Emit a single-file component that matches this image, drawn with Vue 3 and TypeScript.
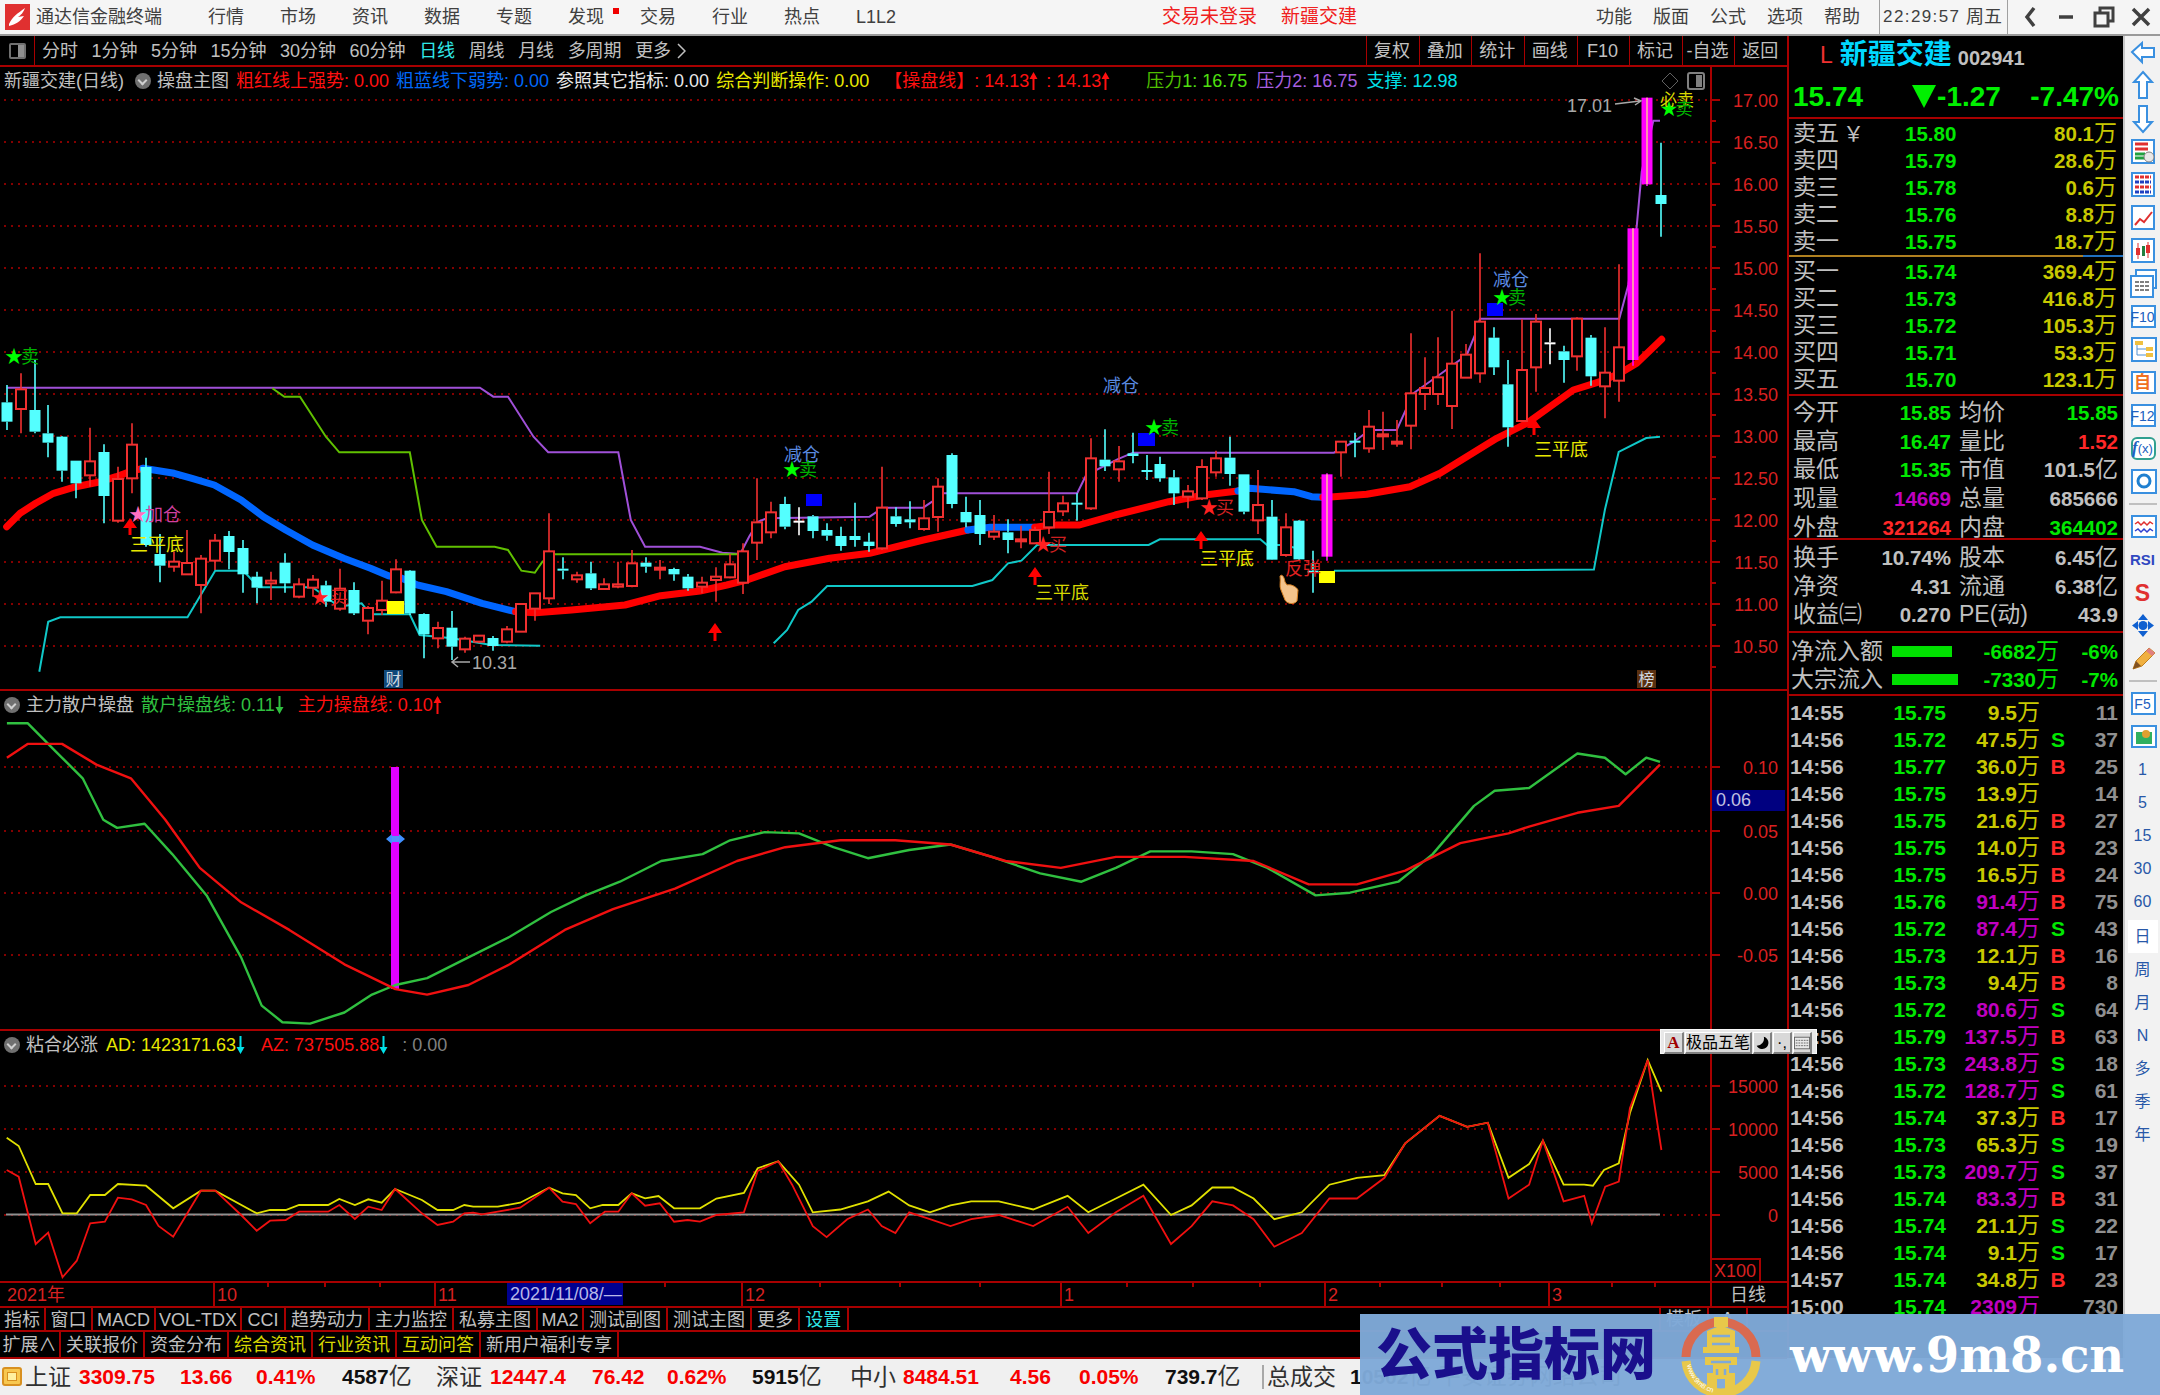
<script setup lang="ts">
type Pt = [number, number]
type Conv = (x: number, y: number) => Pt
const z8: Conv = (x, y) => [x / 2.24, 330 + y / 3]
const z9: Conv = (x, y) => [700 + x / 2.24, 330 + y / 3]
const z10: Conv = (x, y) => [1300 + x / 3, 80 + y / 3]
const sh: Conv = (x, y) => [x * 1.3776, y * 1.3776]
const z12: Conv = (x, y) => [x / 2.24, 1020 + y / 3]
const z11: Conv = (x, y) => [1580 + x / 2.703, 1020 + y / 3]
const zz = (c: Conv, f: number[]): Pt[] => {
  const o: Pt[] = []
  for (let i = 0; i < f.length; i += 2) o.push(c(f[i], f[i + 1]))
  return o
}
const d = (p: Pt[]) => 'M' + p.map((q) => q[0].toFixed(1) + ' ' + q[1].toFixed(1)).join('L')

const thick = [
  { c: '#ff0000', d: d(zz(z8, [15, 590, 45, 550, 80, 520, 120, 490, 170, 470, 225, 455, 260, 440, 290, 425, 320, 415])) },
  { c: '#0066ff', d: d(zz(z8, [320, 415, 390, 430, 430, 445, 480, 465, 540, 510, 590, 560, 640, 600, 700, 645, 770, 685, 830, 715, 870, 737, 900, 745, 935, 765, 1000, 785, 1080, 820, 1155, 845])) },
  { c: '#ff0000', d: d([...zz(z8, [1155, 845, 1200, 848, 1280, 840, 1400, 825, 1480, 797]), ...zz(z9, [0, 783, 60, 765, 110, 748, 190, 710, 290, 685, 380, 670, 500, 630, 600, 600])]) },
  { c: '#0066ff', d: d(zz(z9, [600, 600, 650, 592, 750, 592])) },
  { c: '#ff0000', d: d(zz(z9, [750, 592, 790, 585, 850, 585, 930, 555, 1050, 515, 1130, 495, 1205, 483])) },
  { c: '#0066ff', d: d(zz(z9, [1205, 483, 1230, 475, 1260, 478, 1330, 485, 1370, 500, 1395, 502])) },
  { c: '#ff0000', d: d([...zz(z9, [1395, 502, 1420, 500]), ...zz(z10, [200, 1243, 330, 1220, 420, 1180, 500, 1130, 590, 1075, 680, 1030, 820, 930, 900, 905, 960, 880, 1010, 850, 1085, 778])]) },
]
const purple = d([
  ...zz(z8, [15, 173, 1075, 173, 1105, 200, 1138, 200, 1195, 320, 1228, 367, 1385, 367, 1413, 570, 1445, 650]),
  ...zz(z9, [0, 650, 50, 668, 90, 672, 110, 620, 130, 575, 150, 565, 380, 560, 410, 533, 500, 533, 520, 515, 545, 490, 845, 490, 865, 435, 935, 388, 970, 368, 1420, 368, 1465, 335, 1500, 300]),
  ...zz(z10, [225, 1050, 290, 1050, 340, 940, 410, 890, 500, 825, 525, 765, 540, 716, 958, 716, 985, 615, 1010, 440, 1025, 275, 1060, 122, 1080, 122]),
])
const green = d([
  ...zz(z8, [610, 175, 637, 200, 672, 200, 730, 320, 760, 367, 918, 367, 945, 570, 978, 650, 1108, 650, 1138, 660, 1168, 722, 1198, 728, 1215, 695, 1240, 673]),
  ...zz(z9, [90, 673]),
])
const cyan1 = d(zz(z8, [88, 1025, 108, 875, 135, 862, 420, 862, 482, 722, 545, 722, 580, 772, 700, 772, 760, 830, 810, 820, 830, 853, 918, 853, 940, 915, 1013, 925, 1100, 945, 1210, 947]))
const cyan2 = d(zz(z9, [165, 940, 195, 900, 220, 840, 250, 815, 285, 768, 610, 768, 655, 750, 690, 700, 720, 692, 755, 645, 1005, 645, 1030, 628, 1255, 628, 1270, 645, 1300, 645, 1340, 655]))
const cyan3 = d([...zz(z9, [1420, 722]), ...zz(sh, [1157, 413.5, 1165, 370, 1175, 328, 1195, 318, 1205, 317])])

type C = [number, number, number, number, string]
const raw: C[] = [
  [165, 217, 275, 300, 'c'], [130, 178, 237, 310, 'r'], [90, 240, 305, 310, 'c'], [225, 310, 338, 382, 'c'], [318, 320, 422, 455, 'c'],
  [392, 392, 460, 505, 'c'], [293, 394, 436, 470, 'r'], [343, 366, 498, 580, 'c'], [410, 447, 572, 578, 'r'], [280, 344, 445, 490, 'r'],
  [383, 411, 645, 650, 'c'], [612, 672, 707, 757, 'c'], [665, 695, 710, 725, 'r'], [600, 699, 733, 735, 'r'], [675, 686, 765, 850, 'r'],
  [612, 632, 692, 720, 'r'], [603, 618, 666, 718, 'c'], [630, 654, 733, 788, 'c'], [725, 740, 773, 820, 'c'], [725, 752, 760, 810, 'r'],
  [670, 698, 760, 788, 'c'], [745, 763, 800, 805, 'r'], [735, 749, 773, 800, 'r'], [752, 766, 815, 830, 'c'], [716, 776, 836, 842, 'r'],
  [757, 780, 850, 855, 'c'], [828, 834, 872, 913, 'r'], [752, 812, 840, 855, 'r'], [688, 718, 787, 790, 'r'], [720, 722, 850, 855, 'c'],
  [850, 852, 913, 985, 'c'], [875, 894, 925, 955, 'r'], [843, 893, 950, 990, 'c'], [920, 926, 958, 968, 'r'], [915, 917, 935, 940, 'r'],
  [918, 924, 948, 962, 'c'], [888, 898, 935, 940, 'r'], [820, 822, 905, 905, 'r'], [790, 790, 836, 872, 'r'], [550, 664, 805, 822, 'r'],
  [682, 716, 722, 748, 'c'], [725, 736, 748, 758, 'r'], [695, 730, 775, 780, 'c'], [745, 763, 777, 780, 'r'], [695, 763, 770, 775, 'r'],
  [660, 700, 768, 772, 'r'], [682, 698, 710, 728, 'c'], [690, 713, 719, 748, 'r'], [713, 717, 733, 752, 'c'], [732, 740, 775, 782, 'c'],
  [740, 758, 770, 790, 'r'],
  [712, 740, 750, 815, 'r'], [672, 703, 742, 745, 'r'], [640, 664, 758, 792, 'r'], [445, 577, 638, 690, 'r'], [515, 547, 607, 625, 'r'],
  [500, 522, 590, 598, 'c'], [532, 572, 576, 616, 'w'], [555, 559, 603, 625, 'c'], [580, 600, 617, 632, 'c'], [590, 618, 648, 662, 'c'],
  [518, 618, 630, 650, 'c'], [608, 635, 648, 665, 'c'], [410, 533, 655, 660, 'r'], [532, 559, 582, 590, 'c'], [514, 568, 577, 595, 'c'],
  [510, 565, 597, 602, 'r'], [445, 470, 561, 605, 'r'], [370, 375, 522, 535, 'c'], [500, 546, 577, 592, 'c'], [510, 555, 612, 645, 'c'],
  [555, 605, 620, 630, 'r'], [568, 607, 630, 670, 'c'], [587, 628, 634, 655, 'r'], [590, 600, 640, 640, 'r'], [425, 546, 592, 612, 'r'],
  [497, 520, 544, 558, 'r'], [490, 518, 523, 572, 'c'], [325, 385, 535, 540, 'r'], [298, 389, 409, 423, 'c'], [348, 394, 418, 455, 'r'],
  [308, 370, 378, 400, 'c'], [375, 420, 424, 450, 'c'], [380, 402, 445, 455, 'c'], [420, 442, 490, 525, 'c'], [465, 484, 500, 535, 'r'],
  [388, 411, 505, 510, 'r'], [362, 385, 427, 440, 'r'], [320, 383, 432, 467, 'c'], [433, 433, 545, 553, 'c'], [420, 525, 571, 612, 'r'],
  [510, 560, 689, 690, 'c'], [550, 592, 675, 680, 'r'], [570, 572, 688, 690, 'c'], [662, 722, 724, 788, 'c'], [430, 433, 680, 692, 'm'],
  // from index 96 the y values are read on the 80-based crop
  [1085, 1085, 1117, 1190, 'r'], [1058, 1082, 1086, 1132, 'c'], [990, 1040, 1105, 1118, 'r'], [995, 1063, 1069, 1110, 'r'], [1020, 1085, 1091, 1100, 'r'],
  [760, 940, 1037, 1108, 'r'], [832, 924, 942, 990, 'r'], [772, 892, 942, 975, 'r'], [692, 851, 978, 1047, 'r'], [792, 824, 893, 893, 'r'],
  [520, 725, 880, 908, 'r'], [742, 773, 862, 885, 'c'], [840, 913, 1042, 1100, 'c'], [718, 870, 1023, 1025, 'r'], [702, 725, 862, 935, 'r'],
  [745, 787, 791, 853, 'w'], [797, 814, 840, 908, 'c'], [712, 716, 829, 872, 'r'], [765, 773, 889, 917, 'c'], [742, 878, 919, 1015, 'r'],
  [553, 802, 902, 965, 'r'], [445, 445, 840, 857, 'm'], [53, 53, 313, 318, 'm'], [188, 345, 372, 470, 'c'],
]
const candles = raw.map((c, i) => {
  const base = i < 96 ? 330 : 80
  const x = Math.round(6.7 + 13.9 * i)
  const [h, t, b, l] = c.slice(0, 4).map((v) => base + (v as number) / 3)
  const colour = { c: '#54ffff', r: '#f03030', w: '#ffffff', m: '#ff00ff' }[c[4]] as string
  return { x, wick: `M${x} ${h.toFixed(1)}V${t.toFixed(1)}M${x} ${b.toFixed(1)}V${l.toFixed(1)}`, t, h: Math.max(b - t, 2), type: c[4], colour }
})

const prices = [17, 16.5, 16, 15.5, 15, 14.5, 14, 13.5, 13, 12.5, 12, 11.5, 11, 10.5]
const yP = (p: number) => 100 + (17 - p) * 84
const axis1 = prices.map((p) => ({ y: yP(p), t: p.toFixed(2) }))
const minor1 = prices.map((p) => yP(p) + 21)

const axis2 = [
  { y: 767, t: '0.10' },
  { y: 831, t: '0.05' },
  { y: 893, t: '0.00' },
  { y: 955, t: '-0.05' },
]
const axis3 = [
  { y: 1086, t: '15000' },
  { y: 1129, t: '10000' },
  { y: 1172, t: '5000' },
  { y: 1215, t: '0' },
]

const green2 = d(zz(sh, [5, 525, 20, 525, 40, 545, 60, 565, 75, 595, 85, 601, 105, 598, 125, 620, 150, 650, 175, 695, 190, 730, 205, 742, 225, 743, 250, 735, 270, 722, 287, 715, 310, 710, 340, 695, 370, 680, 400, 662, 425, 650, 450, 640, 480, 625, 510, 620, 530, 610, 555, 604, 580, 605, 605, 615, 630, 623, 660, 617, 690, 613, 720, 622, 755, 634, 785, 640, 810, 630, 835, 618, 865, 618, 895, 620, 920, 630, 955, 650, 980, 648, 1015, 640, 1040, 620, 1070, 585, 1085, 574, 1110, 572, 1145, 547, 1165, 550, 1180, 562, 1195, 550, 1205, 553]))
const red2 = d(zz(sh, [5, 550, 20, 540, 45, 540, 70, 555, 95, 565, 120, 595, 145, 630, 175, 655, 210, 675, 250, 700, 287, 718, 310, 722, 340, 715, 370, 700, 410, 675, 445, 660, 490, 645, 535, 625, 570, 615, 610, 610, 650, 610, 690, 613, 730, 625, 770, 630, 810, 622, 860, 622, 910, 625, 950, 642, 985, 642, 1020, 632, 1060, 612, 1095, 605, 1110, 600, 1145, 590, 1175, 585, 1205, 555]))

const yellow3 = d([
  ...zz(z12, [15, 353, 42, 378, 80, 492, 108, 492, 140, 580, 172, 580, 202, 525, 235, 525, 264, 492, 327, 497, 388, 565, 450, 512, 482, 512, 575, 580, 605, 570, 640, 570, 670, 555, 735, 555, 760, 537, 795, 555, 825, 538, 855, 548, 885, 507, 945, 540, 980, 570, 1015, 570, 1040, 555, 1060, 560, 1115, 560, 1165, 548, 1230, 503, 1260, 520, 1290, 525, 1322, 565, 1350, 555, 1385, 555, 1415, 520, 1445, 535, 1475, 528, 1510, 565, 1568, 565]),
  ...zz(sh, [520, 870, 540, 866, 550, 848, 565, 843, 580, 860, 590, 880, 610, 878, 630, 872, 645, 865, 660, 875, 675, 880, 690, 875, 705, 872, 725, 872, 750, 878, 775, 868, 790, 880, 810, 870, 830, 860, 850, 882, 865, 875, 880, 862, 895, 862, 910, 870, 925, 885, 945, 880, 965, 860, 985, 855, 1005, 853, 1020, 830, 1045, 810, 1065, 818, 1080, 815, 1095, 855, 1110, 845, 1120, 828, 1135, 860, 1150, 860]),
  ...zz(z11, [35, 497, 65, 450, 105, 430, 135, 280, 183, 120, 220, 215]),
])
const red3 = d([
  ...zz(z12, [15, 450, 42, 470, 80, 672, 108, 638, 140, 772, 172, 722, 202, 610, 235, 605, 264, 533, 295, 538, 327, 555, 355, 618, 388, 650, 450, 512, 482, 512, 540, 585, 575, 632, 605, 602, 640, 600, 670, 575, 735, 575, 760, 555, 795, 597, 825, 560, 855, 570, 885, 507, 945, 580, 980, 615, 1015, 605, 1040, 580, 1060, 578, 1080, 583, 1115, 575, 1165, 563, 1230, 503, 1260, 545, 1290, 552, 1322, 610, 1355, 575, 1385, 575, 1415, 520, 1445, 557, 1478, 550, 1510, 605, 1540, 600, 1568, 605]),
  ...zz(sh, [520, 882, 540, 880, 550, 850, 565, 843, 575, 860, 590, 890, 600, 898, 615, 885, 630, 878, 640, 890, 650, 895, 660, 880, 675, 885, 690, 890, 705, 885, 725, 882, 750, 890, 775, 876, 790, 895, 810, 880, 830, 868, 850, 903, 865, 890, 880, 872, 895, 875, 910, 885, 925, 905, 945, 895, 965, 870, 985, 870, 1005, 855, 1020, 830, 1045, 810, 1065, 818, 1080, 815, 1095, 870, 1110, 860, 1120, 828, 1135, 872, 1150, 868]),
  ...zz(z11, [32, 610, 68, 500, 105, 485, 135, 265, 183, 120, 220, 390]),
])

const notes = [
  { x: 14, y: 357, t: '★', c: '#00ff00', s: 18 },
  { x: 30, y: 357, t: '卖', c: '#00b000', s: 18 },
  { x: 138, y: 515, t: '★', c: '#ff70c0', s: 18 },
  { x: 163, y: 515, t: '加仓', c: '#d040a0', s: 18 },
  { x: 157, y: 545, t: '三平底', c: '#e8e800', s: 18 },
  { x: 320, y: 598, t: '★', c: '#ff2020', s: 18 },
  { x: 339, y: 598, t: '买', c: '#e02020', s: 18 },
  { x: 802, y: 455, t: '减仓', c: '#5a8ae0', s: 18 },
  { x: 792, y: 470, t: '★', c: '#00ff00', s: 18 },
  { x: 808, y: 470, t: '卖', c: '#00b000', s: 18 },
  { x: 1062, y: 593, t: '三平底', c: '#d8d800', s: 18 },
  { x: 1043, y: 545, t: '★', c: '#ff2020', s: 18 },
  { x: 1058, y: 545, t: '买', c: '#d02020', s: 18 },
  { x: 1121, y: 386, t: '减仓', c: '#5a8ae0', s: 18 },
  { x: 1154, y: 428, t: '★', c: '#00ff00', s: 18 },
  { x: 1170, y: 428, t: '卖', c: '#00b000', s: 18 },
  { x: 1209, y: 508, t: '★', c: '#ff2020', s: 18 },
  { x: 1225, y: 508, t: '买', c: '#d02020', s: 18 },
  { x: 1227, y: 559, t: '三平底', c: '#e8e800', s: 18 },
  { x: 1303, y: 569, t: '反弹', c: '#e02020', s: 18 },
  { x: 1511, y: 280, t: '减仓', c: '#5a8ae0', s: 18 },
  { x: 1502, y: 298, t: '★', c: '#00ff00', s: 18 },
  { x: 1517, y: 298, t: '卖', c: '#00b000', s: 18 },
  { x: 1561, y: 450, t: '三平底', c: '#e8e800', s: 18 },
  { x: 1677, y: 100, t: '必卖', c: '#d8d800', s: 17 },
  { x: 1669, y: 109, t: '★', c: '#00ff00', s: 17 },
  { x: 1684, y: 109, t: '卖', c: '#00b000', s: 17 },
]
const squares = [
  { x: 387, y: 601, w: 17, h: 13, c: '#ffff00' },
  { x: 806, y: 494, w: 16, h: 12, c: '#0000ff' },
  { x: 1138, y: 433, w: 17, h: 13, c: '#0000ff' },
  { x: 1319, y: 571, w: 16, h: 12, c: '#ffff00' },
  { x: 1487, y: 303, w: 16, h: 13, c: '#0000ff' },
]
const arrow = (x: number, y1: number, y2: number) =>
  `M${x} ${y1}L${x + 7} ${y1 + 10}H${x + 1.5}V${y2}H${x - 1.5}V${y1 + 10}H${x - 7}Z`
const arrows = [arrow(130, 518, 535), arrow(715, 623, 641), arrow(1035, 567, 585), arrow(1201, 531, 549), arrow(1534, 418, 435)]

const menus = ['行情', '市场', '资讯', '数据', '专题', '发现', '交易', '行业', '热点', 'L1L2']
const right = ['功能', '版面', '公式', '选项', '帮助']
const periods = ['分时', '1分钟', '5分钟', '15分钟', '30分钟', '60分钟', '日线', '周线', '月线', '多周期']
const tools = ['复权', '叠加', '统计', '画线', 'F10', '标记', '-自选', '返回']
const tabs1 = ['指标', '窗口', 'MACD', 'VOL-TDX', 'CCI', '趋势动力', '主力监控', '私募主图', 'MA2', '测试副图', '测试主图', '更多', '设置']
const tabs2 = ['扩展∧', '关联报价', '资金分布', '综合资讯', '行业资讯', '互动问答', '新用户福利专享']

const sells = [
  { l: '卖五', mark: '￥', p: '15.80', v: '80.1' },
  { l: '卖四', mark: '', p: '15.79', v: '28.6' },
  { l: '卖三', mark: '', p: '15.78', v: '0.6' },
  { l: '卖二', mark: '', p: '15.76', v: '8.8' },
  { l: '卖一', mark: '', p: '15.75', v: '18.7' },
]
const buys = [
  { l: '买一', mark: '', p: '15.74', v: '369.4' },
  { l: '买二', mark: '', p: '15.73', v: '416.8' },
  { l: '买三', mark: '', p: '15.72', v: '105.3' },
  { l: '买四', mark: '', p: '15.71', v: '53.3' },
  { l: '买五', mark: '', p: '15.70', v: '123.1' },
]
const stats1 = [
  ['今开', '15.85', 'g', '均价', '15.85', 'g', ''],
  ['最高', '16.47', 'g', '量比', '1.52', 'r', ''],
  ['最低', '15.35', 'g', '市值', '101.5', 'w', '亿'],
  ['现量', '14669', 'p', '总量', '685666', 'w', ''],
  ['外盘', '321264', 'r', '内盘', '364402', 'g', ''],
]
const stats2 = [
  ['换手', '10.74%', 'w', '股本', '6.45', 'w', '亿'],
  ['净资', '4.31', 'w', '流通', '6.38', 'w', '亿'],
  ['收益㈢', '0.270', 'w', 'PE(动)', '43.9', 'w', ''],
]
const trades: [string, string, string, string, string][] = [
  ['14:55', '15.75', '9.5', '', '11'], ['14:56', '15.72', '47.5', 'S', '37'], ['14:56', '15.77', '36.0', 'B', '25'], ['14:56', '15.75', '13.9', '', '14'],
  ['14:56', '15.75', '21.6', 'B', '27'], ['14:56', '15.75', '14.0', 'B', '23'], ['14:56', '15.75', '16.5', 'B', '24'], ['14:56', '15.76', '91.4', 'B', '75'],
  ['14:56', '15.72', '87.4', 'S', '43'], ['14:56', '15.73', '12.1', 'B', '16'], ['14:56', '15.73', '9.4', 'B', '8'], ['14:56', '15.72', '80.6', 'S', '64'],
  ['14:56', '15.79', '137.5', 'B', '63'], ['14:56', '15.73', '243.8', 'S', '18'], ['14:56', '15.72', '128.7', 'S', '61'], ['14:56', '15.74', '37.3', 'B', '17'],
  ['14:56', '15.73', '65.3', 'S', '19'], ['14:56', '15.73', '209.7', 'S', '37'], ['14:56', '15.74', '83.3', 'B', '31'], ['14:56', '15.74', '21.1', 'S', '22'],
  ['14:56', '15.74', '9.1', 'S', '17'], ['14:57', '15.74', '34.8', 'B', '23'], ['15:00', '15.74', '2309', '', '730'],
]
const stripText = ['1', '5', '15', '30', '60']
const stripText2 = ['日', '周', '月', 'N', '多', '季', '年']
const monthMarks = [
  { x: 214, t: '10' },
  { x: 435, t: '11' },
  { x: 742, t: '12' },
  { x: 1061, t: '1' },
  { x: 1325, t: '2' },
  { x: 1549, t: '3' },
]
const ticks = [268, 325, 380, 665, 820, 900, 980, 1127, 1193, 1260, 1380, 1442, 1500, 1612, 1655]
</script>

<template>
  <div class="app">
    <header class="title">
      <svg class="logo" viewBox="0 0 25 26">
        <rect width="25" height="26" fill="#e03030" />
        <path d="M4 20C8 12 12 10 20 4C18 9 16 11 13 13L19 12C15 18 11 20 4 22Z" fill="#ffffff" />
      </svg>
      <span class="brand">通达信金融终端</span>
      <nav class="menu">
        <span v-for="m in menus" :key="m" class="mi">{{ m }}<i v-if="m === '发现'" class="dot"></i></span>
      </nav>
      <span class="alert first">交易未登录</span>
      <span class="alert second">新疆交建</span>
      <nav class="menu-r">
        <span v-for="m in right" :key="m">{{ m }}</span>
      </nav>
      <div class="clock"><span class="time">22:29:57</span><span>周五</span></div>
      <div class="win">
        <svg viewBox="0 0 150 24" width="150" height="24">
          <path d="M18 3L11 12L18 21" class="wb" />
          <path d="M43 12H57" class="wb" />
          <path d="M79 8H92V21H79ZM84 8V3H97V16H92" class="wb thin" />
          <path d="M117 4L133 20M133 4L117 20" class="wb" />
        </svg>
      </div>
    </header>

    <div class="main">
      <section class="left">
        <div class="toolbar">
          <div class="tb-icon"><i></i></div>
          <div class="periods">
            <span v-for="p in periods" :key="p" :class="{ on: p === '日线' }">{{ p }}</span>
            <span class="more">更多<svg width="9" height="18" viewBox="0 0 9 18"><path d="M1 2L8 9L1 16" class="chev" /></svg></span>
          </div>
          <div class="tools">
            <span v-for="t in tools" :key="t">{{ t }}</span>
          </div>
        </div>

        <div class="panel p1">
          <svg class="chart" viewBox="0 67 1787 622" width="1787" height="622">
            <path v-for="a in axis1" :key="a.t" :d="`M4 ${a.y}H1711`" class="dots" />
            <path :d="purple" class="ln" stroke="#a050d8" />
            <path :d="green" class="ln" stroke="#60c000" />
            <path :d="cyan1" class="ln" stroke="#10c8c8" />
            <path :d="cyan2" class="ln" stroke="#10c8c8" />
            <path :d="cyan3" class="ln" stroke="#10c8c8" />
            <path v-for="(t, i) in thick" :key="i" :d="t.d" :stroke="t.c" class="thick" />
            <g v-for="(c, i) in candles" :key="i">
              <path :d="c.wick" :stroke="c.colour" class="wick" />
              <rect v-if="c.type === 'r'" :x="c.x - 5" :y="c.t" width="10" :height="c.h" class="hollow" :stroke="c.colour" />
              <rect v-else :x="c.x - 5.5" :y="c.t" width="11" :height="c.h" :fill="c.colour" />
              <rect v-if="c.type === 'm'" :x="c.x - 1" :y="c.t" width="2" :height="c.h" fill="#ff90b0" />
            </g>
            <rect v-for="(s, i) in squares" :key="'s' + i" :x="s.x" :y="s.y" :width="s.w" :height="s.h" :fill="s.c" />
            <path v-for="(a, i) in arrows" :key="'a' + i" :d="a" fill="#ff0000" />
            <text v-for="(n, i) in notes" :key="'n' + i" :x="n.x" :y="n.y + 6" :fill="n.c" :font-size="n.s" text-anchor="middle">{{ n.t }}</text>
            <text x="1567" y="112" class="gray18">17.01</text>
            <path d="M1615 104L1640 101M1634 98L1641 101L1635 105" class="thinline" />
            <text x="472" y="669" class="gray18">10.31</text>
            <path d="M470 662H452M458 657L452 662L458 667" class="thinline" />
            <rect x="384" y="670" width="19" height="18" fill="#104878" />
            <text x="393.5" y="685" class="badge-t" text-anchor="middle">财</text>
            <rect x="1637" y="670" width="19" height="18" fill="#5a3010" />
            <text x="1646.5" y="685" class="badge-t" text-anchor="middle">榜</text>
            <path d="M1280 576C1282 574 1284 576 1285 582L1287 585C1290 584 1296 586 1298 590L1297 601C1294 605 1287 604 1285 600L1281 590C1279 586 1281 582 1280 576Z" fill="#f4c48c" stroke="#d88020" stroke-width="1" />
            <path d="M1711 67V689" class="axis" />
            <g v-for="a in axis1" :key="'t' + a.t">
              <path :d="`M1711 ${a.y}H1720`" class="axis" />
              <text x="1778" :y="a.y + 7" class="ax" text-anchor="end">{{ a.t }}</text>
            </g>
            <path v-for="m in minor1" :key="m" :d="`M1711 ${m}H1716`" class="axis" />
          </svg>
          <div class="legend l1">
            <span class="c-w s1">新疆交建(日线)</span>
            <i class="fold"></i>
            <span class="c-w">操盘主图</span>
            <span class="c-r g">粗红线上强势: 0.00</span>
            <span class="c-b g">粗蓝线下弱势: 0.00</span>
            <span class="c-wh g">参照其它指标: 0.00</span>
            <span class="c-y g">综合判断操作: 0.00</span>
            <span class="c-r g2">【操盘线】: 14.13<svg class="arw" viewBox="0 0 9 18"><path d="M4.5 0L8.5 7H5.5V18H3.5V7H.5Z" fill="currentColor" /></svg></span>
            <span class="c-r g5">: 14.13<svg class="arw" viewBox="0 0 9 18"><path d="M4.5 0L8.5 7H5.5V18H3.5V7H.5Z" fill="currentColor" /></svg></span>
            <span class="g3"><b class="c-g">压力</b><b class="c-g2">1: 16.75</b></span>
            <span class="g6"><b class="c-p">压力2: 16.75</b></span>
            <span class="c-c g6">支撑: 12.98</span>
            <span class="ctrl">
              <svg width="44" height="22" viewBox="0 0 44 22">
                <path d="M8 3L16 11L8 19L0 11Z" class="dia" />
                <rect x="26" y="3" width="16" height="16" rx="2" class="box" />
                <rect x="34" y="5" width="6" height="12" fill="#808080" />
              </svg>
            </span>
          </div>
        </div>

        <div class="panel p2">
          <svg class="chart" viewBox="0 691 1787 338" width="1787" height="338">
            <path v-for="a in axis2" :key="a.t" :d="`M4 ${a.y}H1711`" class="dots" />
            <rect x="391" y="767" width="8" height="222" fill="#e000ff" />
            <path d="M386 839L392 834V844ZM405 839L399 834V844Z" fill="#4090ff" />
            <rect x="392" y="836" width="7" height="6" fill="#5090ff" />
            <path :d="green2" class="mid" stroke="#30c040" />
            <path :d="red2" class="mid" stroke="#f01010" />
            <path d="M1711 691V1029" class="axis" />
            <g v-for="a in axis2" :key="a.t">
              <path :d="`M1711 ${a.y}H1720`" class="axis" />
              <text x="1778" :y="a.y + 7" class="ax" text-anchor="end">{{ a.t }}</text>
            </g>
            <rect x="1712" y="790" width="73" height="21" fill="#000080" />
            <text x="1716" y="806" class="val">0.06</text>
          </svg>
          <div class="legend l2">
            <i class="fold"></i>
            <span class="c-w">主力散户操盘</span>
            <span class="c-g3 g">散户操盘线: 0.11<svg class="arw dn" viewBox="0 0 9 18"><path d="M4.5 0L8.5 7H5.5V18H3.5V7H.5Z" fill="currentColor" /></svg></span>
            <span class="c-r g4">主力操盘线: 0.10<svg class="arw" viewBox="0 0 9 18"><path d="M4.5 0L8.5 7H5.5V18H3.5V7H.5Z" fill="currentColor" /></svg></span>
          </div>
        </div>

        <div class="panel p3">
          <svg class="chart" viewBox="0 1031 1787 250" width="1787" height="250">
            <path v-for="a in axis3" :key="a.t" :d="`M4 ${a.y}H1711`" class="dots" />
            <path d="M6 1214.5H1660" class="zero" />
            <path :d="yellow3" class="small" stroke="#e0e000" />
            <path :d="red3" class="small" stroke="#f01010" />
            <path d="M1711 1031V1281" class="axis" />
            <g v-for="a in axis3" :key="a.t">
              <path :d="`M1711 ${a.y}H1720`" class="axis" />
              <text x="1778" :y="a.y + 7" class="ax" text-anchor="end">{{ a.t }}</text>
            </g>
            <path d="M1711 1259H1760V1281" class="axis" fill="none" />
            <text x="1714" y="1277" class="ax">X100</text>
          </svg>
          <div class="legend l3">
            <i class="fold"></i>
            <span class="c-w">粘合必涨</span>
            <span class="c-y g7">AD: 1423171.63<svg class="arw dn c-c" viewBox="0 0 9 18"><path d="M4.5 0L8.5 7H5.5V18H3.5V7H.5Z" fill="currentColor" /></svg></span>
            <span class="c-r g8">AZ: 737505.88<svg class="arw dn c-c" viewBox="0 0 9 18"><path d="M4.5 0L8.5 7H5.5V18H3.5V7H.5Z" fill="currentColor" /></svg></span>
            <span class="c-d g4">: 0.00</span>
          </div>
        </div>

        <svg class="taxis" viewBox="0 1283 1787 23" width="1787" height="23">
          <text x="7" y="1301" class="ax">2021年</text>
          <g v-for="m in monthMarks" :key="m.x">
            <path :d="`M${m.x} 1283V1306`" class="axis" />
            <text :x="m.x + 3" y="1301" class="ax">{{ m.t }}</text>
          </g>
          <path v-for="t in ticks" :key="t" :d="`M${t} 1283V1287`" class="axis" />
          <rect x="507" y="1283" width="116" height="22" fill="#000090" />
          <text x="510" y="1300" class="date">2021/11/08/—</text>
          <path d="M1711 1283V1306" class="axis" />
          <text x="1730" y="1301" class="daily">日线</text>
        </svg>

        <div class="tabs t1">
          <div class="grid-1">
            <span v-for="t in tabs1" :key="t" :class="{ cy: t === '设置' }">{{ t }}</span>
          </div>
          <div class="extra">
            <span class="tpl">模板</span>
            <span class="tpl2">A</span>
          </div>
        </div>
        <div class="tabs t2">
          <div class="grid-2">
            <span v-for="t in tabs2" :key="t" :class="{ ye: ['综合资讯', '行业资讯', '互动问答'].includes(t) }">{{ t }}</span>
          </div>
        </div>
      </section>

      <aside class="quote">
        <div class="q-head">
          <span class="big-l">L</span>
          <span class="q-name">新疆交建</span>
          <span class="q-code">002941</span>
        </div>
        <div class="q-price">
          <span class="p1v">15.74</span>
          <span class="p2v"><i class="tri"></i>-1.27</span>
          <span class="p3v">-7.47%</span>
        </div>
        <div class="book sell">
          <div v-for="r in sells" :key="r.l" class="b-row">
            <span class="lab">{{ r.l }}<em v-if="r.mark">{{ r.mark }}</em></span>
            <span class="num c-g1">{{ r.p }}</span>
            <span class="num c-y2">{{ r.v }}<u>万</u></span>
          </div>
        </div>
        <div class="split"></div>
        <div class="book buy">
          <div v-for="r in buys" :key="r.l" class="b-row">
            <span class="lab">{{ r.l }}</span>
            <span class="num c-g1">{{ r.p }}</span>
            <span class="num c-y2">{{ r.v }}<u>万</u></span>
          </div>
        </div>
        <div class="stats s-a">
          <div v-for="r in stats1" :key="r[0]" class="s-row">
            <div class="cell"><span class="lab">{{ r[0] }}</span><span class="num" :class="'k-' + r[2]">{{ r[1] }}</span></div>
            <div class="cell"><span class="lab">{{ r[3] }}</span><span class="num" :class="'k-' + r[5]">{{ r[4] }}<u v-if="r[6]">{{ r[6] }}</u></span></div>
          </div>
        </div>
        <div class="stats s-b">
          <div v-for="r in stats2" :key="r[0]" class="s-row">
            <div class="cell"><span class="lab">{{ r[0] }}</span><span class="num" :class="'k-' + r[2]">{{ r[1] }}</span></div>
            <div class="cell"><span class="lab">{{ r[3] }}</span><span class="num" :class="'k-' + r[5]">{{ r[4] }}<u v-if="r[6]">{{ r[6] }}</u></span></div>
          </div>
        </div>
        <div class="flow">
          <div class="f-row">
            <span class="lab">净流入额</span><i class="bar b60"></i><span class="num c-g1 fv">-6682<u>万</u></span><span class="num c-g1 fp">-6%</span>
          </div>
          <div class="f-row">
            <span class="lab">大宗流入</span><i class="bar b66"></i><span class="num c-g1 fv">-7330<u>万</u></span><span class="num c-g1 fp">-7%</span>
          </div>
        </div>
        <div class="trades">
          <div v-for="(t, i) in trades" :key="i" class="t-row">
            <span class="num k-w">{{ t[0] }}</span>
            <span class="num c-g1 ra">{{ t[1] }}</span>
            <span class="num ra" :class="parseFloat(t[2]) >= 70 ? 'k-p' : 'c-y2'">{{ t[2] }}<u>万</u></span>
            <span class="num ce" :class="t[3] === 'B' ? 'k-r' : 'c-g1'">{{ t[3] }}</span>
            <span class="num ra k-d">{{ t[4] }}</span>
          </div>
        </div>
      </aside>

      <aside class="strip">
        <svg class="si" viewBox="0 0 30 33"><path d="M4 16L14 7V12H26V21H14V26Z" class="arr" /></svg>
        <svg class="si" viewBox="0 0 30 33"><path d="M15 3L24 13H19V29H11V13H6Z" class="arr" /></svg>
        <svg class="si" viewBox="0 0 30 33"><path d="M15 30L24 20H19V4H11V20H6Z" class="arr" /></svg>
        <svg class="si" viewBox="0 0 30 33">
          <rect x="4" y="5" width="22" height="23" class="ib" />
          <path d="M7 9H20M7 14H20" stroke="#e03030" stroke-width="3" />
          <path d="M7 19H17M7 23H17" stroke="#20a040" stroke-width="3" />
          <circle cx="21" cy="22" r="5" fill="#e8e8e8" stroke="#808080" />
        </svg>
        <svg class="si" viewBox="0 0 30 33">
          <rect x="4" y="5" width="22" height="23" class="ib" />
          <path d="M7 9H23" stroke="#e03030" stroke-width="3" stroke-dasharray="4 1" />
          <path d="M7 14H23" stroke="#2040c0" stroke-width="3" stroke-dasharray="4 1" />
          <path d="M7 19H23" stroke="#e03030" stroke-width="3" stroke-dasharray="4 1" />
          <path d="M7 24H23" stroke="#2040c0" stroke-width="3" stroke-dasharray="4 1" />
        </svg>
        <svg class="si" viewBox="0 0 30 33">
          <rect x="4" y="5" width="22" height="23" class="ib" />
          <path d="M7 24L12 18L16 21L24 11" stroke="#e03030" stroke-width="2" fill="none" />
        </svg>
        <svg class="si" viewBox="0 0 30 33">
          <rect x="4" y="5" width="22" height="23" class="ib" />
          <path d="M10 9V25M20 8V24" stroke="#e03030" />
          <rect x="8" y="14" width="4" height="7" fill="#e03030" />
          <rect x="14" y="12" width="3" height="10" fill="#208040" />
          <rect x="18" y="11" width="4" height="8" fill="#e03030" />
        </svg>
        <svg class="si" viewBox="0 0 30 33">
          <rect x="8" y="3" width="20" height="18" class="ib" />
          <rect x="3" y="9" width="22" height="21" class="ib" />
          <path d="M7 15H21M7 19H21M7 23H21" stroke="#808080" stroke-width="2" stroke-dasharray="4 1" />
        </svg>
        <div class="si box"><span class="st">F10</span></div>
        <svg class="si" viewBox="0 0 30 33">
          <rect x="4" y="5" width="24" height="23" class="ib" />
          <rect x="7" y="8" width="8" height="4" fill="#f0c040" />
          <rect x="18" y="14" width="7" height="4" fill="#f0c040" />
          <rect x="18" y="20" width="7" height="4" fill="#f0c040" />
          <path d="M9 12V22H18M9 16H18" stroke="#5090d0" fill="none" />
        </svg>
        <div class="si box"><span class="zi">自</span></div>
        <div class="si box"><span class="st">F12</span></div>
        <div class="si box teal"><span class="fx"><i>f</i>(x)</span></div>
        <svg class="si" viewBox="0 0 30 33">
          <rect x="4" y="5" width="24" height="23" class="ib" />
          <circle cx="16" cy="16" r="6" fill="none" stroke="#2080d0" stroke-width="3" />
        </svg>
        <i class="sep"></i>
        <svg class="si" viewBox="0 0 30 33">
          <rect x="4" y="6" width="24" height="21" class="ib" />
          <path d="M7 14L10 12L13 15L16 12L19 15L22 12L25 14" stroke="#e03030" fill="none" stroke-width="1.5" />
          <path d="M7 21L10 19L13 22L16 19L19 22L22 19L25 21" stroke="#3040d0" fill="none" stroke-width="1.5" />
        </svg>
        <div class="si"><span class="rsi">RSI</span></div>
        <div class="si"><span class="ss">S</span></div>
        <svg class="si" viewBox="0 0 30 33">
          <path d="M15 5L20 11H10ZM15 28L20 22H10ZM4 16.5L10 12V21ZM26 16.5L20 12V21Z" fill="#1060d0" />
          <circle cx="15" cy="16.5" r="4.5" fill="#1060d0" />
        </svg>
        <svg class="si" viewBox="0 0 30 33">
          <path d="M5 27L8 19L21 6L27 11L14 24Z" fill="#f0b040" stroke="#c08020" />
          <path d="M5 27L8 19L13 24Z" fill="#805020" />
          <path d="M21 6L27 11L24 14L18 9Z" fill="#e08080" />
        </svg>
        <i class="sep"></i>
        <div class="si box"><span class="st">F5</span></div>
        <svg class="si" viewBox="0 0 30 33">
          <rect x="4" y="6" width="24" height="21" class="ib" />
          <rect x="8" y="12" width="16" height="12" fill="#30b060" />
          <circle cx="18" cy="14" r="4" fill="#e0a030" />
        </svg>
        <div v-for="t in stripText" :key="t" class="si"><span class="tx">{{ t }}</span></div>
        <div class="gapb"></div>
        <div v-for="t in stripText2" :key="t" class="si" :class="{ sel: t === '日' }"><span class="tx">{{ t }}</span></div>
      </aside>
    </div>

    <footer class="status">
      <i class="st-ico"><b></b></i>
      <span class="lc">上证</span><span class="red">3309.75</span><span class="red">13.66</span><span class="red">0.41%</span><span class="blk">4587<u>亿</u></span>
      <span class="lc">深证</span><span class="red">12447.4</span><span class="red">76.42</span><span class="red">0.62%</span><span class="blk">5915<u>亿</u></span>
      <span class="lc">中小</span><span class="red">8484.51</span><span class="red">4.56</span><span class="red">0.05%</span><span class="blk">739.7<u>亿</u></span>
      <span class="lc tot">总成交</span><span class="blk rest">10502<u>亿 平安证券网络公司</u></span>
    </footer>

    <div class="mark">
      <span class="mk-cn">公式指标网</span>
      <svg class="mk-logo" viewBox="0 0 84 84" width="84" height="84">
        <path id="mkarc" d="M7 44A35 35 0 0 1 77 44" fill="none" stroke="#d96a50" stroke-width="9" />
        <path d="M7 48A35 35 0 0 0 42 80A35 35 0 0 0 77 48" fill="none" stroke="#e8c84a" stroke-width="9" />
        <path d="M35 4H49V14H46L56 18V34H60V40H24V34H28V18L38 14H35Z" fill="#e8c84a" />
        <path d="M26 44H58V52H50V60H56V80H46V66H38V80H28V60H34V52H26Z" fill="#e8c84a" />
        <path d="M33 23H51M33 31H51M32 49H52M38 56V62M46 56V62" stroke="#7fa9d8" stroke-width="2.5" />
        <path id="mkt" d="M8 52A35 35 0 0 0 32 79" fill="none" />
        <text class="mk-s"><textPath href="#mkt">www.9m8.cn</textPath></text>
      </svg>
      <span class="mk-en">www.9m8.cn</span>
    </div>

    <div class="ime">
      <span class="a">A</span><span class="n">极品五笔</span>
      <span class="k">
        <svg width="18" height="18" viewBox="0 0 18 18"><path d="M11 2A7 7 0 1 1 3 12A8 8 0 0 0 11 2Z" fill="#000" /></svg>
      </span>
      <span class="k">·,</span>
      <span class="k">
        <svg width="18" height="14" viewBox="0 0 18 14"><rect x="0.5" y="0.5" width="17" height="13" fill="#e8e8e8" stroke="#606060" /><path d="M2 4H16M2 7H16M2 10H16" stroke="#606060" stroke-dasharray="2 1" /></svg>
      </span>
    </div>
  </div>
</template>

<style>
html,
body {
  margin: 0;
  background: #000;
}
</style>

<style scoped>
.app {
  position: relative;
  width: 2160px;
  height: 1395px;
  overflow: hidden;
  background: #000;
  color: #c0c0c0;
  font-family: 'Liberation Sans', 'Noto Sans CJK SC', sans-serif;
  font-size: 18px;
  line-height: 24px;
}
u {
  text-decoration: none;
  font-weight: 400;
}
i {
  font-style: normal;
}
b {
  font-weight: 400;
}

/* title bar */
.title {
  display: flex;
  align-items: center;
  height: 34px;
  background: #f5f5f5;
  border-bottom: 2px solid #9a9a9a;
  color: #404040;
  font-size: 18px;
  white-space: nowrap;
}
.logo {
  width: 25px;
  height: 26px;
  margin-left: 5px;
  flex: none;
}
.brand {
  width: 126px;
  margin-left: 6px;
}
.menu {
  display: flex;
  margin-left: 46px;
  gap: 36px;
}
.mi {
  position: relative;
  display: block;
}
.dot {
  position: absolute;
  right: -15px;
  top: 3px;
  width: 6px;
  height: 6px;
  background: #f00000;
}
.alert {
  color: #f02020;
  font-size: 19px;
}
.first {
  margin-left: 266px;
}
.second {
  margin-left: 24px;
}
.menu-r {
  display: flex;
  gap: 21px;
  margin-left: 239px;
}
.clock {
  display: flex;
  align-items: center;
  gap: 11px;
  height: 34px;
  margin-left: 19px;
  padding: 0 5px 0 3px;
  border-left: 1px solid #a0a0a0;
  border-right: 1px solid #a0a0a0;
}
.time {
  font-size: 17px;
  width: 72px;
  letter-spacing: 1.4px;
}
.win {
  margin-left: 8px;
  height: 24px;
}
.wb {
  fill: none;
  stroke: #404040;
  stroke-width: 3.5;
}
.thin {
  stroke-width: 3;
}

/* layout */
.main {
  display: flex;
  height: 1322px;
}
.left {
  width: 1787px;
  flex: none;
}
.toolbar {
  display: flex;
  align-items: center;
  height: 29px;
  border-bottom: 2px solid #a80000;
  white-space: nowrap;
}
.tb-icon {
  display: flex;
  align-items: center;
  justify-content: center;
  width: 34px;
  height: 29px;
  border-right: 1px solid #a80000;
  flex: none;
}
.tb-icon i {
  display: block;
  width: 17px;
  height: 16px;
  border: 2px solid #707070;
  border-radius: 2px;
  box-sizing: border-box;
  background: linear-gradient(90deg, #000 55%, #909090 55%);
}
.periods {
  display: flex;
  gap: 13.5px;
  margin-left: 7px;
}
.more {
  display: flex;
  align-items: center;
  gap: 6px;
}
.chev {
  fill: none;
  stroke: #c0c0c0;
  stroke-width: 1.5;
}
.on {
  color: #30e8e8;
}
.tools {
  display: grid;
  grid-template-columns: repeat(8, 52.6px);
  margin-left: auto;
  height: 29px;
}
.tools span {
  display: flex;
  align-items: center;
  justify-content: center;
  border-left: 1px solid #a80000;
  padding-right: 2px;
}

.panel {
  position: relative;
  border-bottom: 2px solid #a80000;
}
.p1 {
  height: 622px;
}
.p2 {
  height: 338px;
}
.p3 {
  height: 250px;
}
.chart,
.taxis {
  display: block;
}
.legend {
  position: absolute;
  left: 0;
  top: 0;
  width: 1711px;
  height: 27px;
  display: flex;
  align-items: center;
  white-space: nowrap;
  font-size: 18px;
}
.s1 {
  margin-left: 4px;
  width: 131px;
}
.arw {
  display: inline-block;
  width: 9px;
  height: 18px;
  vertical-align: -3px;
}
.dn {
  transform: rotate(180deg);
}
.fold {
  display: block;
  flex: none;
  width: 16px;
  height: 16px;
  border-radius: 50%;
  background: #707070;
  position: relative;
  margin-right: 6px;
}
.fold::after {
  content: '';
  position: absolute;
  left: 4px;
  top: 4px;
  width: 5px;
  height: 5px;
  border-right: 2px solid #d0d0d0;
  border-bottom: 2px solid #d0d0d0;
  transform: rotate(45deg);
}
.g {
  margin-left: 7px;
}
.g2 {
  margin-left: 15px;
}
.g3 {
  margin-left: 36px;
}
.g4 {
  margin-left: 14px;
}
.g5 {
  margin-left: 8px;
}
.g6 {
  margin-left: 9px;
}
.g7 {
  margin-left: 8px;
}
.g8 {
  margin-left: 16px;
}
.ctrl {
  margin-left: auto;
  margin-right: 5px;
  height: 22px;
}
.dia {
  fill: none;
  stroke: #606060;
}
.box {
  fill: #000;
  stroke: #808080;
  stroke-width: 2;
}
.l2 .fold,
.l3 .fold {
  margin-left: 4px;
}
.c-w {
  color: #c0c0c0;
}
.c-wh {
  color: #e8e8e8;
}
.c-r {
  color: #ff1010;
}
.c-b {
  color: #0068f8;
}
.c-y {
  color: #e8e800;
}
.c-g {
  color: #50c000;
}
.c-g2 {
  color: #50e010;
}
.c-p {
  color: #a860e0;
}
.c-c {
  color: #00e0e8;
}
.c-g3 {
  color: #30c040;
}
.c-d {
  color: #808080;
}

.dots {
  stroke: #b00000;
  stroke-width: 1.5;
  stroke-dasharray: 2 5;
  fill: none;
}
.ln {
  fill: none;
  stroke-width: 2;
}
.thick {
  fill: none;
  stroke-width: 7;
  stroke-linecap: round;
  stroke-linejoin: round;
}
.wick {
  fill: none;
  stroke-width: 1.6;
}
.hollow {
  fill: #000;
  stroke-width: 2;
}
.mid {
  fill: none;
  stroke-width: 2.4;
  stroke-linejoin: round;
}
.small {
  fill: none;
  stroke-width: 1.8;
}
.zero {
  stroke: #909090;
  stroke-width: 2;
}
.axis {
  stroke: #a80000;
  stroke-width: 2;
  fill: none;
}
.ax {
  fill: #d82020;
  font-size: 18px;
}
.val {
  fill: #c0c0e0;
  font-size: 18px;
}
.gray18 {
  fill: #a8a8a8;
  font-size: 18px;
}
.thinline {
  fill: none;
  stroke: #a8a8a8;
  stroke-width: 1.5;
}
.badge-t {
  fill: #d0d8e0;
  font-size: 16px;
}
.date {
  fill: #b8b8e8;
  font-size: 18px;
}
.daily {
  fill: #c0c0c0;
  font-size: 18px;
}

/* tabs */
.tabs {
  display: flex;
  white-space: nowrap;
  border-bottom: 2px solid #a80000;
  box-sizing: border-box;
  font-size: 18px;
}
.t1 {
  height: 26px;
  border-top: 2px solid #a80000;
}
.t2 {
  height: 27px;
}
.grid-1,
.grid-2 {
  display: grid;
}
.grid-1 {
  grid-template-columns: 46px 47px 63px 86px 44px 84px 84px 84px 46px 84px 84px 48px 48.5px;
}
.grid-2 {
  grid-template-columns: 61px 84px 84px 84px 84px 84px 138px;
}
.grid-1 span,
.grid-2 span {
  display: flex;
  align-items: center;
  justify-content: center;
  border-right: 2px solid #a80000;
  box-sizing: border-box;
}
.cy {
  color: #30e8e8;
}
.ye {
  color: #d8d800;
}
.extra {
  display: flex;
  margin-left: auto;
  margin-right: 39px;
}
.extra span {
  display: flex;
  align-items: center;
  justify-content: center;
  border-left: 2px solid #a80000;
}
.tpl {
  width: 46px;
}
.tpl2 {
  width: 37px;
  border-right: 2px solid #a80000;
}

/* quote */
.quote {
  width: 334px;
  flex: none;
  border-left: 2px solid #a80000;
  height: 1322px;
  overflow: hidden;
}
.q-head {
  display: flex;
  align-items: center;
  height: 38px;
}
.big-l {
  margin-left: 31px;
  color: #f03030;
  font-size: 23px;
}
.q-name {
  margin-left: 7px;
  color: #00d8ff;
  font-size: 28px;
  font-weight: 700;
}
.q-code {
  margin-left: 6px;
  margin-top: 6px;
  color: #c0c0c0;
  font-size: 20px;
  font-weight: 700;
}
.q-price {
  display: flex;
  align-items: center;
  height: 43px;
  border-bottom: 2px solid #a80000;
  padding: 2px 4px 0;
  box-sizing: border-box;
  height: 45px;
  color: #00f000;
  font-size: 28px;
  font-weight: 700;
}
.p2v {
  margin-left: 49px;
  display: flex;
  align-items: center;
}
.tri {
  display: block;
  width: 0;
  height: 0;
  border-left: 12px solid transparent;
  border-right: 12px solid transparent;
  border-top: 23px solid #00f000;
  margin-right: 1px;
}
.p3v {
  margin-left: auto;
}
.book {
  padding-top: 1px;
}
.b-row {
  display: grid;
  height: 27px;
  align-items: center;
  padding-left: 4px;
  position: relative;
  grid-template-columns: 112px 46px 166px;
}
.lab {
  position: relative;
  font-size: 23px;
  line-height: 27px;
  color: #c0c0c0;
  white-space: nowrap;
}
.lab em {
  font-style: normal;
  font-size: 21px;
  margin-left: 4px;
}
.num {
  font-size: 20.5px;
  font-weight: 700;
  line-height: 27px;
  white-space: nowrap;
}
.num u {
  font-size: 23px;
}
.b-row .lab {
  grid-column: 1;
}
.b-row .num {
  text-align: right;
}
.c-g1 {
  color: #00e800;
}
.c-y2 {
  color: #c8c800;
}
.k-g {
  color: #00e800;
}
.k-r {
  color: #ff2828;
}
.k-w {
  color: #c0c0c0;
}
.k-p {
  color: #c000c0;
}
.k-d {
  color: #909090;
}
.split {
  height: 2px;
  margin-top: 0;
  background: linear-gradient(90deg, #b08020 88%, #2070c0 88%);
}
.buy {
  border-bottom: 2px solid #a80000;
  padding-bottom: 1px;
  padding-top: 1px;
}
.stats {
  border-bottom: 2px solid #a80000;
  box-sizing: border-box;
}
.s-a {
  height: 144px;
  padding-top: 2px;
}
.s-b {
  height: 93px;
  padding-top: 3px;
}
.s-row {
  display: grid;
  grid-template-columns: 158px 159px;
  gap: 8px;
  padding-left: 4px;
  height: 28.7px;
}
.cell {
  display: flex;
  justify-content: space-between;
  align-items: center;
}
.flow {
  height: 63px;
  box-sizing: border-box;
  border-bottom: 2px solid #a80000;
  padding-top: 4px;
}
.f-row {
  display: grid;
  grid-template-columns: 101px 166px 60px;
  height: 28px;
  align-items: center;
  padding-left: 2px;
  position: relative;
}
.bar {
  display: block;
  height: 11px;
  background: #00e000;
}
.f-row .lab,
.f-row .bar {
  grid-row: 1;
}
.f-row .lab {
  grid-column: 1;
}
.f-row .bar {
  grid-column: 2;
}
.b60 {
  width: 60px;
}
.b66 {
  width: 66px;
}
.fv {
  position: absolute;
  right: 64px;
}
.fp {
  grid-column: 3;
  text-align: right;
}
.trades {
  padding-top: 3px;
}
.t-row {
  display: grid;
  grid-template-columns: 70px 86px 94px 36px 42px;
  height: 27px;
  padding-left: 1px;
}
.t-row .num {
  font-size: 21px;
}
.t-row .num u {
  font-size: 23px;
}
.ra {
  text-align: right;
}
.ce {
  text-align: center;
  padding-left: 0;
}

/* strip */
.strip {
  width: 37px;
  flex: none;
  height: 1322px;
  box-sizing: border-box;
  background: #f2f2f2;
  border-left: 2px solid #c8c8c8;
  display: flex;
  flex-direction: column;
  align-items: center;
}
.si {
  flex: none;
  display: flex;
  align-items: center;
  justify-content: center;
  width: 30px;
  height: 33px;
  position: relative;
}
.arr {
  fill: #ffffff;
  stroke: #3a90e0;
  stroke-width: 2;
}
.ib {
  fill: #ffffff;
  stroke: #3a90e0;
  stroke-width: 2;
}
.box::before {
  content: '';
  position: absolute;
  left: 3px;
  right: 2px;
  top: 5px;
  bottom: 5px;
  background: #fff;
  border: 2px solid #3a90e0;
  box-sizing: border-box;
}
.teal::before {
  border-color: #30a090;
  border-radius: 6px;
}
.st {
  position: relative;
  color: #2060c0;
  font-size: 14px;
}
.zi {
  position: relative;
  color: #f07020;
  font-size: 17px;
  font-weight: 700;
}
.fx {
  position: relative;
  color: #2060c0;
  font-size: 13px;
}
.fx i {
  font-family: 'Liberation Serif', serif;
  font-style: italic;
  font-weight: 700;
  font-size: 17px;
}
.rsi {
  color: #3048c0;
  font-size: 15px;
  font-weight: 700;
}
.ss {
  color: #e03030;
  font-size: 23px;
  font-weight: 700;
}
.tx {
  color: #2858a8;
  font-size: 16px;
}
.sel {
  background: #ffffff;
}
.sep {
  display: block;
  flex: none;
  width: 28px;
  height: 2px;
  margin: 5px 0;
  background: #c0c0c0;
}
.gapb {
  height: 2px;
  flex: none;
}

/* status */
.status {
  display: grid;
  grid-template-columns: 25px 54px 101px 76px 86px 94px 54px 102px 75px 85px 98px 53px 107px 69px 86px 97px 88px 300px;
  align-items: center;
  height: 37px;
  background: #f0f0f0;
  white-space: nowrap;
  overflow: hidden;
}
.st-ico {
  display: block;
  width: 20px;
  height: 19px;
  margin-left: 2px;
  box-sizing: border-box;
  border: 2px solid #d89020;
  border-radius: 3px;
  background: #f8c850;
  padding: 3px;
}
.st-ico b {
  display: block;
  width: 100%;
  height: 100%;
  background: #fff0a0;
  border: 1px solid #d89020;
  box-sizing: border-box;
}
.lc {
  color: #303030;
  font-size: 23px;
}
.red {
  color: #f80000;
  font-size: 21px;
  font-weight: 700;
}
.blk {
  color: #101010;
  font-size: 21px;
  font-weight: 700;
}
.blk u {
  font-size: 23px;
  color: #303030;
}
.tot {
  border-left: 2px solid #a8a8a8;
  padding-left: 3px;
}
.rest {
  color: #101010;
}

/* overlay */
.mark {
  position: absolute;
  left: 1360px;
  top: 1314px;
  width: 800px;
  height: 81px;
  display: flex;
  align-items: center;
  background: rgba(127, 169, 216, 0.97);
}
.mk-cn {
  margin-left: 16px;
  width: 280px;
  color: #1a0f8c;
  font-size: 56px;
  font-weight: 900;
  line-height: 81px;
  white-space: nowrap;
}
.mk-logo {
  margin-left: 23px;
  flex: none;
}
.mk-s {
  fill: #ffffff;
  font-size: 7px;
}
.mk-en {
  margin-left: 27px;
  color: #ffffff;
  font-family: 'DejaVu Serif', serif;
  font-weight: 700;
  font-size: 48px;
  white-space: nowrap;
}
.ime {
  position: absolute;
  left: 1660px;
  top: 1029px;
  width: 157px;
  height: 25px;
  box-sizing: border-box;
  padding: 2px 3px;
  display: flex;
  background: #e8e8e8;
  border: 1px solid #f8f8f8;
  gap: 1px;
}
.ime span {
  display: flex;
  align-items: center;
  justify-content: center;
  height: 19px;
  background: #d8d8d8;
  border-right: 2px solid #808080;
  border-bottom: 2px solid #808080;
  border-top: 1px solid #fff;
  border-left: 1px solid #fff;
  color: #000;
  font-size: 16px;
  box-sizing: content-box;
}
.ime .a {
  width: 17px;
  color: #a00000;
  font-family: 'Liberation Serif', serif;
  font-weight: 700;
  font-size: 17px;
}
.ime .n {
  width: 64px;
}
.ime .k {
  width: 16px;
}
</style>
